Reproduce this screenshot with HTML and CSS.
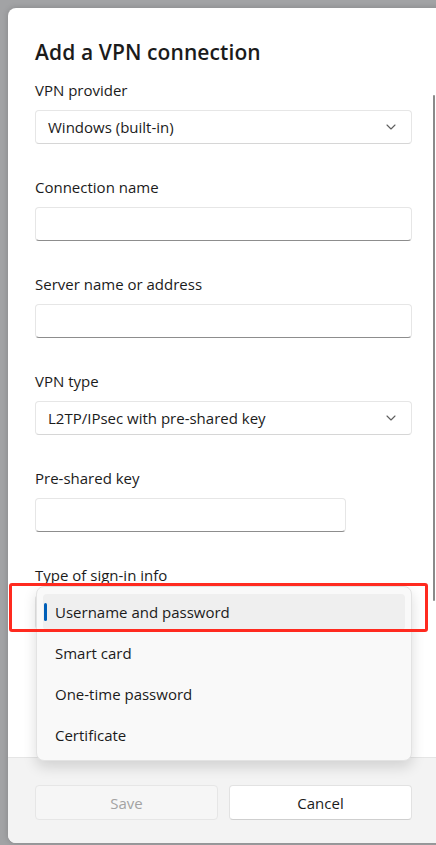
FILE: index.html
```html
<!DOCTYPE html>
<html lang="en">

<head>
    <meta charset="UTF-8">
    <meta name="viewport" content="width=device-width, initial-scale=1.0">
    <title>Add a VPN connection</title>
    <link rel="stylesheet" href="styles.css">
</head>

<body>
    <div class="dialog">
        <div class="content">
            <h1 class="title">Add a VPN connection</h1>

            <div class="field">
                <label class="label">VPN provider</label>
                <div class="select">
                    <span>Windows (built-in)</span>
                    <svg class="chevron" width="10" height="6" viewBox="0 0 10 6"><path d="M1 1 L5 5 L9 1" fill="none" stroke="#5f5f5f" stroke-width="1.1" stroke-linecap="round" stroke-linejoin="round"/></svg>
                </div>
            </div>

            <div class="field">
                <label class="label">Connection name</label>
                <div class="input"></div>
            </div>

            <div class="field">
                <label class="label">Server name or address</label>
                <div class="input"></div>
            </div>

            <div class="field">
                <label class="label">VPN type</label>
                <div class="select">
                    <span>L2TP/IPsec with pre-shared key</span>
                    <svg class="chevron" width="10" height="6" viewBox="0 0 10 6"><path d="M1 1 L5 5 L9 1" fill="none" stroke="#5f5f5f" stroke-width="1.1" stroke-linecap="round" stroke-linejoin="round"/></svg>
                </div>
            </div>

            <div class="field">
                <label class="label">Pre-shared key</label>
                <div class="input short"></div>
            </div>

            <div class="field signin">
                <label class="label">Type of sign-in info</label>
                <div class="select"></div>

                <ul class="menu">
                    <li class="option selected">Username and password</li>
                    <li class="option">Smart card</li>
                    <li class="option">One-time password</li>
                    <li class="option">Certificate</li>
                </ul>
                <div class="highlight"></div>
            </div>
        </div>

        <div class="footer">
            <button class="btn" disabled>Save</button>
            <button class="btn">Cancel</button>
        </div>

        <div class="scrollbar"></div>
    </div>
</body>

</html>
```

FILE: styles.css
```css
html,
body {
    margin: 0;
    height: 100%;
    overflow: hidden;
}

body {
    background-color: #a2a3a5;
    font-family: "Open Sans", "Noto Sans", sans-serif;
    color: #1b1b1b;
    padding: 8px 0 0 8px;
    box-sizing: border-box;
}

.dialog {
    position: relative;
    width: 440px;
    height: 835px;
    background: white;
    border-radius: 8px;
    box-shadow: 0px 0px 6px rgba(0, 0, 0, 0.18);
    display: flex;
    flex-direction: column;
    overflow: hidden;
}

.content {
    flex: 1;
    padding: 30px 0 0 27px;
    width: 377px;
}

.title {
    margin: 0 0 14px;
    font-size: 21px;
    font-weight: 600;
    line-height: 28px;
    letter-spacing: 0.1px;
}

.field {
    display: flex;
    flex-direction: column;
    margin-bottom: 33px;
}

.label {
    font-size: 15px;
    line-height: 20px;
    margin-bottom: 10px;
}

.select,
.input {
    height: 34px;
    box-sizing: border-box;
    border: 1px solid #e6e6e6;
    border-radius: 4px;
    background: white;
}

.select {
    display: flex;
    align-items: center;
    justify-content: space-between;
    padding: 0 15px 0 12px;
    font-size: 15px;
    border-bottom-color: #d6d6d6;
}

.input {
    border-bottom: 1px solid #8d8d8d;
}

.input.short {
    width: 311px;
}

.signin {
    position: relative;
}

.menu {
    position: absolute;
    top: 21px;
    left: 1px;
    width: 376px;
    margin: 0;
    padding: 7px 6px;
    box-sizing: border-box;
    list-style: none;
    background: #f9f9f9;
    border: 1px solid #e3e3e3;
    border-radius: 8px;
    box-shadow: 0px 6px 14px rgba(0, 0, 0, 0.14);
    display: flex;
    flex-direction: column;
    gap: 5px;
}

.option {
    position: relative;
    height: 36px;
    line-height: 36px;
    padding-left: 12px;
    border-radius: 4px;
    font-size: 15px;
}

.option.selected {
    background: #efefef;
}

.option.selected::before {
    content: "";
    position: absolute;
    left: 1px;
    top: 9px;
    width: 3px;
    height: 18px;
    border-radius: 2px;
    background: #005fb8;
}

.highlight {
    position: absolute;
    left: -26px;
    top: 18px;
    width: 419px;
    height: 49px;
    box-sizing: border-box;
    border: 3px solid #ff2a1f;
    border-radius: 3px;
}

.footer {
    height: 86px;
    box-sizing: border-box;
    background: #f3f3f3;
    border-top: 1px solid #e5e5e5;
    padding: 27px 0 0 27px;
    display: flex;
    gap: 11px;
}

.btn {
    width: 183px;
    height: 35px;
    border: 1px solid #e2e2e2;
    border-bottom-color: #cfcfcf;
    border-radius: 4px;
    background: white;
    font-family: inherit;
    font-size: 15px;
    color: #1b1b1b;
}

.btn:disabled {
    background: #f6f6f6;
    border-color: #e6e6e6;
    color: #a3a3a3;
}

.scrollbar {
    position: absolute;
    top: 87px;
    left: 425px;
    width: 2px;
    height: 506px;
    border-radius: 1px;
    background: #8a8a8a;
}
```
